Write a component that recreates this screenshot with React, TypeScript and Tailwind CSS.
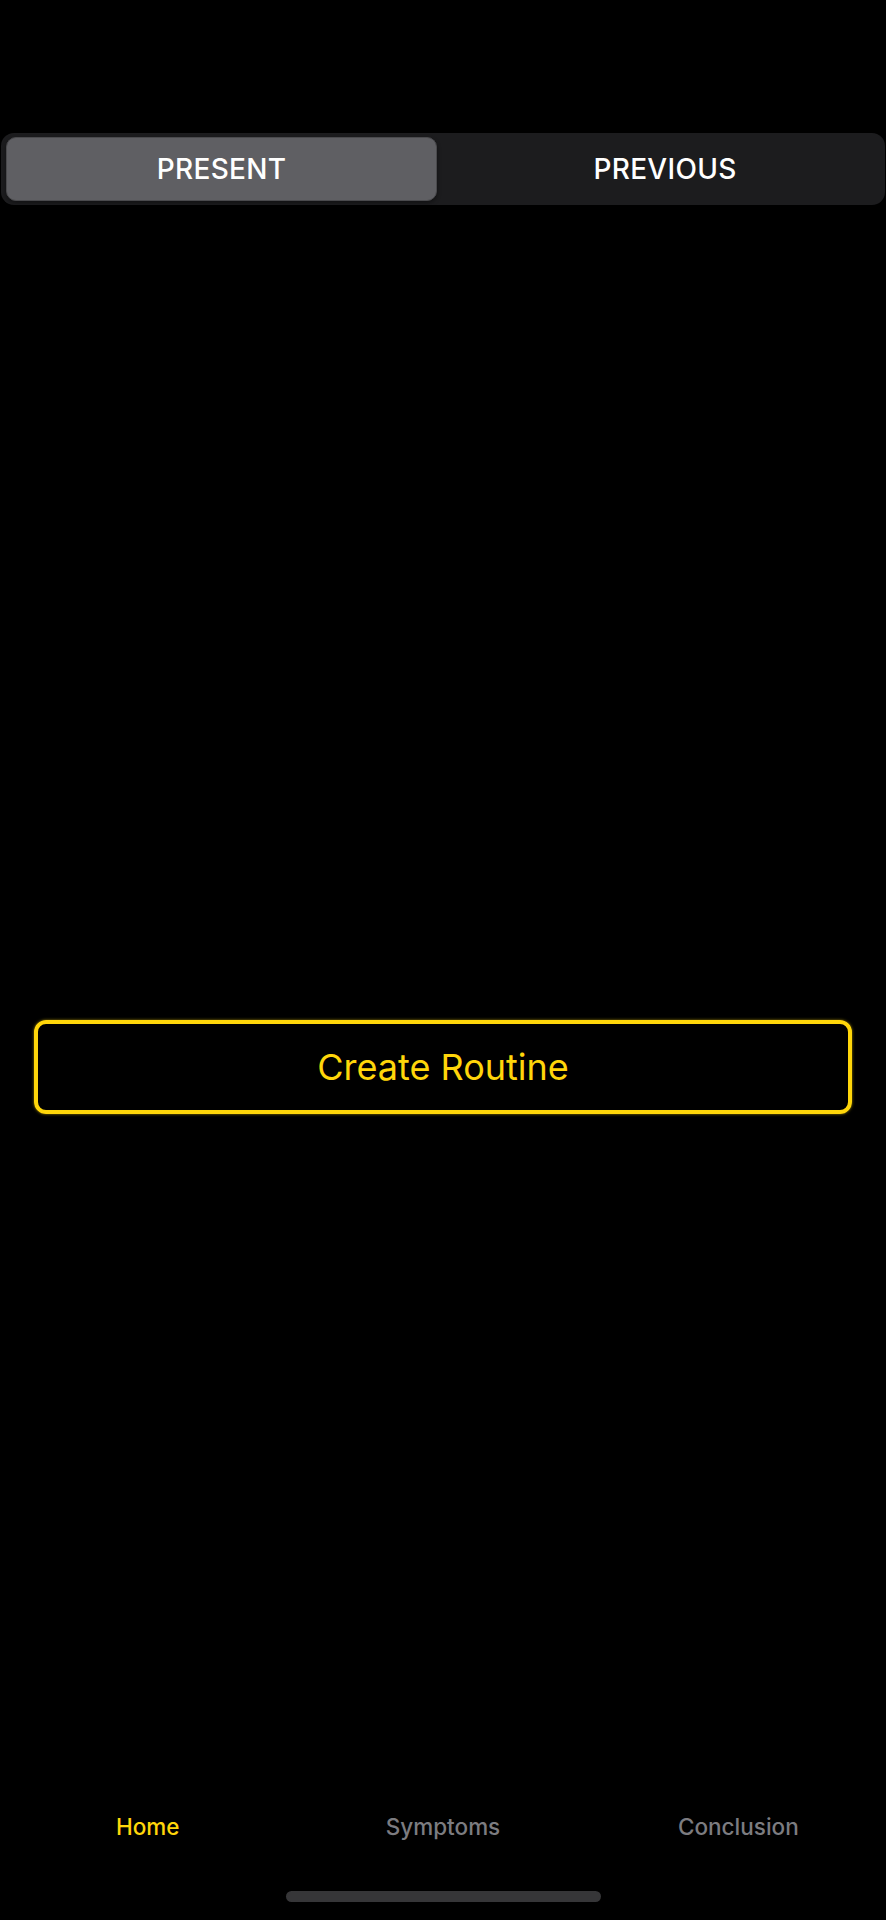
export default function App() {
  const tabs = [
    { label: 'Home', active: true },
    { label: 'Symptoms', active: false },
    { label: 'Conclusion', active: false },
  ];

  return (
    <div className="h-[1920px] w-full bg-black flex flex-col font-['Inter','Noto_Sans',sans-serif] antialiased">
      {/* segmented control */}
      <div className="pt-[133px] px-[1px]">
        <div className="h-[72px] rounded-[13px] bg-[#1c1c1e] px-[5px] py-[4px] flex">
          <button className="w-[431px] h-[64px] rounded-[10px] bg-[#5f5f63] border border-[#4a4a4d] shadow-[0_2px_4px_rgba(0,0,0,0.4)] text-white text-[28px] font-medium tracking-[0.3px]">
            PRESENT
          </button>
          <button className="flex-1 h-[64px] pl-[13px] text-white text-[28px] font-medium tracking-[0.3px]">
            PREVIOUS
          </button>
        </div>
      </div>

      <div className="mt-[815px] px-[34px]">
        <button className="w-full h-[94px] rounded-[12px] border-[4px] border-[#ffd60a] shadow-[0_0_3px_rgba(255,214,10,0.6)] text-[#ffd60a] text-[36px]">
          Create Routine
        </button>
      </div>

      <div className="flex-1" />

      {/* tab bar */}
      <div className="grid grid-cols-3 h-[30px] leading-[30px] text-[22.5px] font-medium">
        {tabs.map((t) => (
          <div
            key={t.label}
            className={t.active ? 'text-center text-[#ffd60a]' : 'text-center text-[#7c7c80]'}
          >
            {t.label}
          </div>
        ))}
      </div>
      <div className="mt-[49px] mb-[18px] flex justify-center">
        <div className="w-[315px] h-[11px] rounded-full bg-[#363638]" />
      </div>
    </div>
  );
}
